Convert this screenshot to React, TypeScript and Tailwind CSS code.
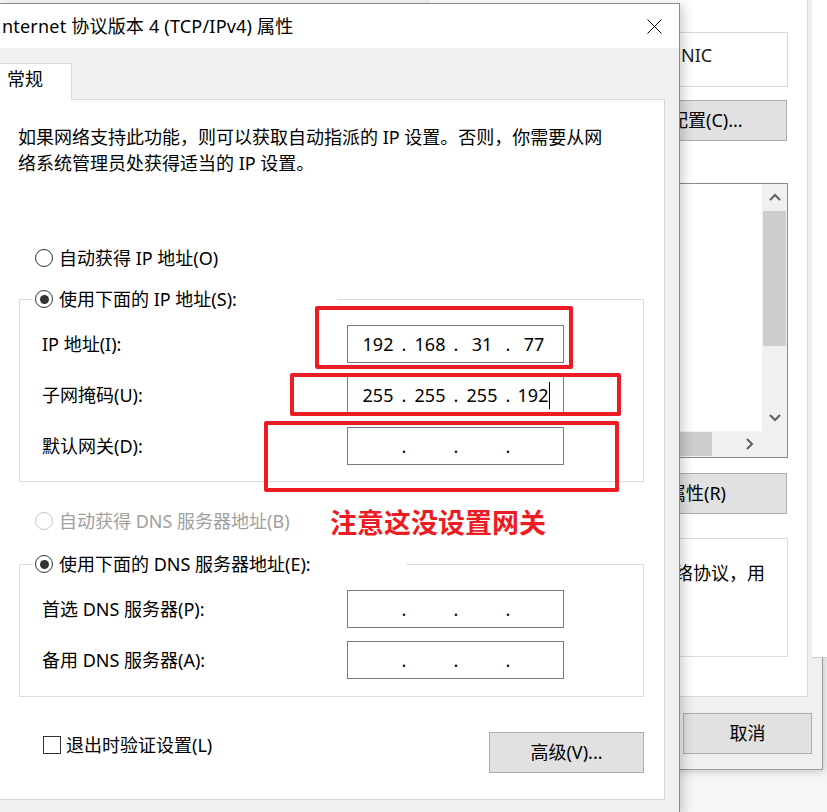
import React from 'react'

const FONT = "font-['Noto_Sans','Noto_Sans_CJK_SC',sans-serif]"

const Radio = ({ checked = false, disabled = false }: { checked?: boolean; disabled?: boolean }) => (
  <span
    className={`flex h-[18px] w-[18px] shrink-0 items-center justify-center rounded-full border bg-white ${
      disabled ? 'border-[#c6c6c6]' : 'border-[#333333]'
    }`}
  >
    {checked && <span className="h-[9px] w-[9px] rounded-full bg-[#333333]" />}
  </span>
)

const IpBox = ({ parts, cursor = false }: { parts?: string[]; cursor?: boolean }) => {
  const p = parts ?? ['', '', '', '']
  return (
    <div className="flex h-[38px] w-[217px] items-center border border-[#7a7a7a] bg-white pl-[10px] leading-[24px]">
      {p.map((v, i) => (
        <React.Fragment key={i}>
          {i > 0 && <span className="w-[12px] text-center">.</span>}
          <span className="flex w-[40px] items-center justify-center">
            {v}
            {cursor && i === 3 && <span className="ml-px h-[27px] w-px bg-black" />}
          </span>
        </React.Fragment>
      ))}
    </div>
  )
}

const Row = ({ label, children }: { label: string; children: React.ReactNode }) => (
  <div className="flex items-center pl-[9px]">
    <span className="w-[305px] leading-[26px]">{label}</span>
    {children}
  </div>
)

const Chevron = ({ dir }: { dir: 'up' | 'down' | 'right' }) => {
  const pts = dir === 'up' ? '1,7 6,2 11,7' : dir === 'down' ? '1,2 6,7 11,2' : '2,1 7,6 2,11'
  const w = dir === 'right' ? 9 : 12
  const h = dir === 'right' ? 12 : 9
  return (
    <svg width={w} height={h} viewBox={`0 0 ${w} ${h}`}>
      <polyline points={pts} fill="none" stroke="#606060" strokeWidth="2" />
    </svg>
  )
}

const BackWindow = () => (
  <div className="absolute left-[430px] top-0 z-0 flex h-[770px] w-[393px] flex-col items-end border-b border-r border-[#9a9a9a] bg-[#f0f0f0] shadow-[2px_2px_8px_rgba(0,0,0,0.18)]">
    <div className="mr-[14px] flex h-[697px] w-[378px] flex-col items-end border-b border-r border-[#d9d9d9] bg-white pr-[19px]">
      <div className="mt-[32px] h-[55px] w-[120px] border border-[#d9d9d9] pl-[12px] pt-[10px] leading-[24px] text-[#1c1c1c]">
        NIC
      </div>
      <div className="mr-px mt-[13px] flex h-[41px] w-[130px] items-center border border-[#adadad] bg-[#e1e1e1] pl-[12px]">
        配置(C)...
      </div>
      <div className="mt-[42px] flex h-[275px] w-[130px] flex-col border border-[#8a8a8a]">
        <div className="flex flex-1">
          <div className="flex-1 rounded-br-[3px] bg-white" />
          <div className="flex w-[25px] flex-col bg-[#f0f0f0]">
            <div className="flex h-[27px] items-center justify-center">
              <Chevron dir="up" />
            </div>
            <div className="mx-px h-[135px] bg-[#cdcdcd]" />
            <div className="flex-1" />
            <div className="flex h-[27px] items-center justify-center">
              <Chevron dir="down" />
            </div>
          </div>
        </div>
        <div className="flex h-[26px] bg-[#f0f0f0]">
          <div className="my-px w-[53px] bg-[#cdcdcd]" />
          <div className="flex-1" />
          <div className="flex w-[25px] items-center justify-center">
            <Chevron dir="right" />
          </div>
          <div className="w-[25px]" />
        </div>
      </div>
      <div className="mr-px mt-[15px] flex h-[41px] w-[130px] items-center border border-[#adadad] bg-[#e1e1e1] pl-[10px]">
        属性(R)
      </div>
      <div className="mt-[24px] h-[119px] w-[130px] border border-[#dcdcdc] pl-[16px] pt-[22px] leading-[24px]">
        络协议，用
      </div>
    </div>
    <div className="mr-[10px] mt-[16px] flex h-[41px] w-[129px] items-center justify-center border border-[#adadad] bg-[#e1e1e1]">
      取消
    </div>
  </div>
)

export default function App() {
  return (
    <div className={`relative h-[812px] w-[827px] overflow-hidden bg-[#f6f6f6] text-[18px] text-black ${FONT}`}>
      <BackWindow />

      {/* window edge peeking on the far right */}
      <div className="absolute left-[812px] top-0 z-10 h-[658px] w-[15px] border-b border-[#cfcfcf] bg-white" />

      {/* Front dialog */}
      <div className="absolute left-0 top-[3px] z-20 flex h-[809px] w-[680px] flex-col border-r border-t border-[#8c8c8c] bg-[#f0f0f0] shadow-[4px_2px_10px_rgba(0,0,0,0.18)]">
        <div className="flex h-[44px] items-center justify-between bg-white">
          <span className="pl-[2px] text-[18px] leading-[24px] tracking-[0.2px]">nternet 协议版本 4 (TCP/IPv4) 属性</span>
          <svg width="15" height="15" viewBox="0 0 15 15" className="mr-[17px]">
            <path d="M0.5 0.5 L14.5 14.5 M14.5 0.5 L0.5 14.5" stroke="#000" strokeWidth="1" />
          </svg>
        </div>

        <div className="relative z-10 -mb-px mt-[15px] h-[37px] w-[72px] border-r border-t border-[#d9d9d9] bg-white pl-[7px] pt-[2px] leading-[26px]">
          常规
        </div>

        <div className="flex w-[665px] flex-col border-b border-r border-t border-[#d9d9d9] bg-white pb-[26px]">
          <p className="mt-[24px] pl-[18px] leading-[26px]">
            如果网络支持此功能，则可以获取自动指派的 IP 设置。否则，你需要从网
            <br />
            络系统管理员处获得适当的 IP 设置。
          </p>

          <div className="mt-[69px] flex h-[26px] items-center pl-[35px]">
            <Radio />
            <span className="ml-[6px] leading-[26px]">自动获得 IP 地址(O)</span>
          </div>

          <fieldset className="ml-[19px] mt-[15px] w-[625px] border border-[#dcdcdc] pb-[16px] pl-[13px]">
            <legend className="w-[304px]">
              <div className="flex h-[26px] items-center pl-[2px]">
                <Radio checked />
                <span className="ml-[6px] leading-[26px]">使用下面的 IP 地址(S):</span>
              </div>
            </legend>
            <div className="mt-[13px] flex flex-col gap-[13px]">
              <Row label="IP 地址(I):">
                <IpBox parts={['192', '168', '31', '77']} />
              </Row>
              <Row label="子网掩码(U):">
                <IpBox parts={['255', '255', '255', '192']} cursor />
              </Row>
              <Row label="默认网关(D):">
                <IpBox />
              </Row>
            </div>
          </fieldset>

          <div className="mt-[26px] flex h-[26px] items-center pl-[35px]">
            <Radio disabled />
            <span className="ml-[6px] w-[271px] leading-[26px] text-[#a0a0a0]">自动获得 DNS 服务器地址(B)</span>
            <span className="mt-[3px] text-[27px] font-bold leading-[26px] text-[#ed1c24]">注意这没设置网关</span>
          </div>

          <fieldset className="ml-[19px] mt-[17px] w-[625px] border border-[#dcdcdc] pb-[17px] pl-[13px]">
            <legend className="w-[373px]">
              <div className="flex h-[26px] items-center pl-[2px]">
                <Radio checked />
                <span className="ml-[6px] leading-[26px]">使用下面的 DNS 服务器地址(E):</span>
              </div>
            </legend>
            <div className="mt-[13px] flex flex-col gap-[13px]">
              <Row label="首选 DNS 服务器(P):">
                <IpBox />
              </Row>
              <Row label="备用 DNS 服务器(A):">
                <IpBox />
              </Row>
            </div>
          </fieldset>

          <div className="mt-[35px] flex items-start justify-between pl-[43px] pr-[20px]">
            <div className="flex h-[26px] items-center">
              <span className="h-[18px] w-[18px] border border-[#333333] bg-white" />
              <span className="ml-[5px] leading-[26px]">退出时验证设置(L)</span>
            </div>
            <div className="flex h-[41px] w-[155px] items-center justify-center border border-[#adadad] bg-[#e1e1e1]">
              高级(V)...
            </div>
          </div>
        </div>
      </div>

      {/* red annotation boxes */}
      <div className="absolute left-[315px] top-[306px] z-30 h-[63px] w-[258px] rounded-[2px] border-4 border-[#ec1c24]" />
      <div className="absolute left-[290px] top-[373px] z-30 h-[43px] w-[331px] rounded-[2px] border-4 border-[#ec1c24]" />
      <div className="absolute left-[264px] top-[421px] z-30 h-[71px] w-[355px] rounded-[2px] border-4 border-[#ec1c24]" />
    </div>
  )
}
